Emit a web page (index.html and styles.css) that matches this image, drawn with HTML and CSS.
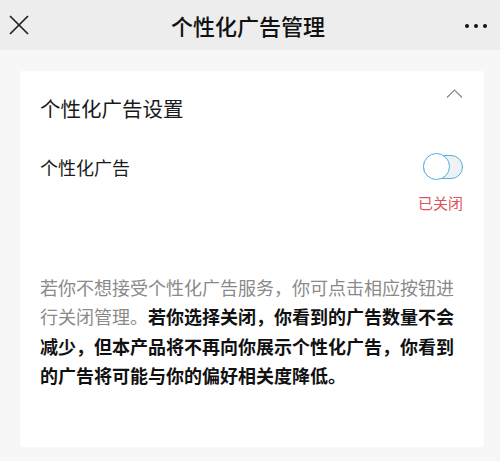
FILE: index.html
```html
<!DOCTYPE html>
<html lang="zh-CN">
<head>
    <meta charset="UTF-8">
    <title>个性化广告管理</title>
    <link rel="stylesheet" href="styles.css">
</head>
<body>
    <header class="topbar">
        <svg class="close" width="20" height="20" viewBox="0 0 20 20">
            <line x1="1" y1="1" x2="19" y2="19"/>
            <line x1="19" y1="1" x2="1" y2="19"/>
        </svg>
        <h1 class="title">个性化广告管理</h1>
        <div class="more"><i></i><i></i><i></i></div>
    </header>

    <div class="card">
        <div class="card-head">
            <h2 class="card-title">个性化广告设置</h2>
            <svg class="chevron" width="17" height="11" viewBox="0 0 17 11">
                <polyline points="1,9.5 8.5,2 16,9.5"/>
            </svg>
        </div>

        <div class="row">
            <span class="row-label">个性化广告</span>
            <div class="toggle"><span class="knob"></span></div>
        </div>
        <div class="status">已关闭</div>

        <p class="desc">若你不想接受个性化广告服务，你可点击相应按钮进行关闭管理。<b>若你选择关闭，你看到的广告数量不会减少，但本产品将不再向你展示个性化广告，你看到的广告将可能与你的偏好相关度降低。</b></p>
    </div>
</body>
</html>
```

FILE: styles.css
```css
html, body {
    margin: 0;
    padding: 0;
}

body {
    background-color: #f7f7f7;
    font-family: "Noto Sans CJK SC", "Noto Sans", sans-serif;
    color: #1a1a1a;
}

.topbar {
    height: 50px;
    background-color: #ededed;
    display: flex;
    align-items: center;
    justify-content: space-between;
    padding: 0 13px 0 9px;
}
.close { stroke: #222; stroke-width: 1.7; }
.title {
    margin: 0;
    font-size: 22px;
    font-weight: 500;
    line-height: 30px;
    color: #111;
    padding-left: 2px;
}
.more {
    display: flex;
    gap: 5px;
    padding-top: 2px;
}
.more i {
    width: 4px;
    height: 4px;
    border-radius: 50%;
    background-color: #111;
}

.card {
    margin: 21px 16px 0 20px;
    background-color: #fff;
    border-radius: 2px;
    box-shadow: 0 1px 2px rgba(0,0,0,0.04);
    padding: 17px 21px 56px 20px;
}

.card-head {
    display: flex;
    justify-content: space-between;
    align-items: flex-start;
}
.card-title {
    margin: 5.5px 0 0 0;
    font-size: 20.5px;
    font-weight: normal;
    line-height: 28px;
}
.chevron { fill: none; stroke: #8a8a8a; stroke-width: 1.2; }

.row {
    display: flex;
    justify-content: space-between;
    align-items: center;
    margin-top: 31px;
    height: 28px;
}
.row-label {
    font-size: 18px;
    line-height: 28px;
}

.toggle {
    position: relative;
    width: 38px;
    height: 22px;
    border: 1.5px solid #56addc;
    border-radius: 13px;
    background-color: #eef2f5;
}
.toggle .knob {
    position: absolute;
    left: -1.5px;
    top: -3px;
    width: 25px;
    height: 25px;
    border: 1.5px solid #56addc;
    border-radius: 50%;
    background-color: #fff;
}

.status {
    text-align: right;
    margin-top: 12px;
    font-size: 15px;
    line-height: 20px;
    color: #dd5459;
}

.desc {
    margin: 60px 0 0 0;
    font-size: 18px;
    line-height: 29.5px;
    color: #8a8a8a;
}
.desc b {
    color: #111;
    font-weight: bold;
}
```
